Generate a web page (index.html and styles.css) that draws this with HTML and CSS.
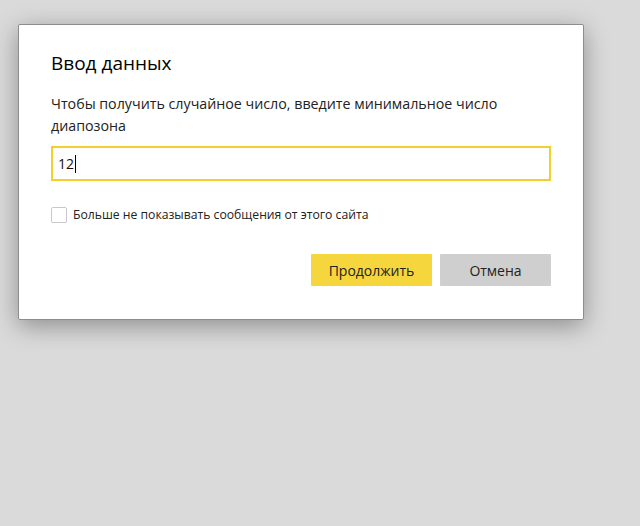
FILE: index.html
```html
<!DOCTYPE html>
<html lang="ru">
<head>
<meta charset="utf-8">
<link rel="stylesheet" href="styles.css">
</head>
<body>
<div class="dialog">
  <div class="title">Ввод данных</div>
  <div class="message">Чтобы получить случайное число, введите минимальное число диапозона</div>
  <div class="field"><span class="value">12</span><span class="caret"></span></div>
  <label class="check"><span class="box"></span><span>Больше не показывать сообщения от этого сайта</span></label>
  <div class="actions">
    <button class="btn primary">Продолжить</button>
    <button class="btn secondary">Отмена</button>
  </div>
</div>
</body>
</html>
```
FILE: styles.css
```css
html, body { margin: 0; padding: 0; }
body {
  width: 640px;
  height: 526px;
  background: #dadada;
  font-family: "Open Sans", "Noto Sans", sans-serif;
  color: #111;
  overflow: hidden;
}
.dialog {
  margin: 24px 0 0 18px;
  width: 500px;
  padding: 25px 32px 33px 32px;
  background: #fff;
  border: 1px solid #8d8d8d;
  border-radius: 2px;
  box-shadow: 0 6px 24px rgba(0,0,0,0.35);
}
.title {
  font-size: 19px;
  line-height: 26px;
  color: #000;
}
.message {
  margin-top: 17px;
  font-size: 14.25px;
  line-height: 22px;
  color: #222;
}
.field {
  margin-top: 9px;
  height: 31px;
  border: 2px solid #f3cf2c;
  display: flex;
  align-items: center;
  padding-left: 5px;
  font-size: 14px;
}
.caret {
  width: 1px;
  height: 18px;
  background: #000;
  margin-left: 1px;
}
.check {
  margin-top: 25px;
  display: flex;
  align-items: center;
  gap: 6px;
  font-size: 12.2px;
  color: #222;
}
.box {
  width: 14px;
  height: 14px;
  border: 1px solid #c8c8c8;
  border-radius: 2px;
  background: #fff;
}
.actions {
  margin-top: 31px;
  display: flex;
  justify-content: flex-end;
  gap: 8px;
}
.btn {
  height: 32px;
  border: none;
  border-radius: 1px;
  font-family: inherit;
  font-size: 14px;
  color: #222;
  padding: 0;
}
.primary { width: 121px; background: #f5d63d; }
.secondary { width: 111px; background: #cfcfcf; }
```
